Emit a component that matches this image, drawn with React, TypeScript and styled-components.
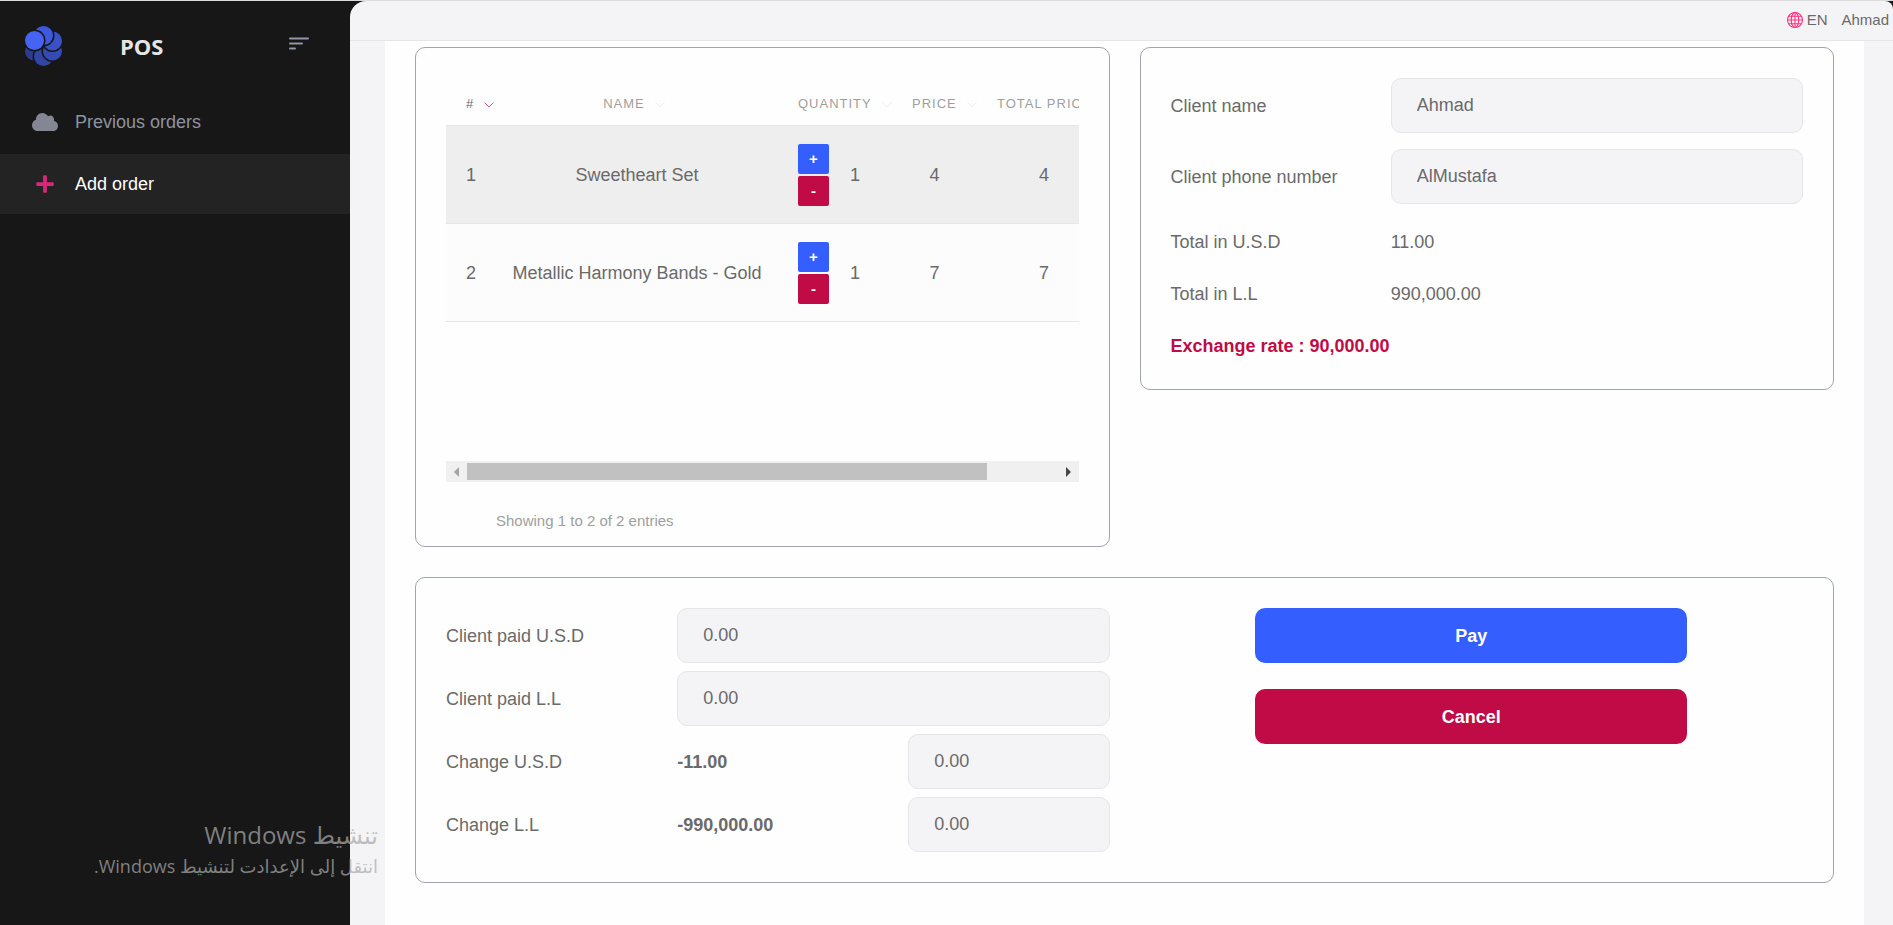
import React from "react";
import styled, { createGlobalStyle } from "styled-components";
import { FaCloud, FaPlus } from "react-icons/fa";

const GlobalStyle = createGlobalStyle`
  *, *::before, *::after { box-sizing: border-box; }
  body {
    margin: 0;
    background: #171717;
    color: #6a6a6a;
    font-family: "Liberation Sans", Arial, sans-serif;
    font-size: 18px;
    line-height: 24px;
  }
  button, input { font: inherit; color: inherit; }
`;

const Page = styled.div`
  display: flex;
  position: relative;
  min-height: 100vh;
  border-top: 1px solid #dcdcdc;
  overflow: hidden;
`;

const Sidebar = styled.aside`
  flex: 0 0 350px;
  background: #171717;
`;

const Brand = styled.div`
  display: grid;
  grid-template-columns: 95px 1fr 40px;
  align-items: center;
  height: 91px;
  padding: 0 21px 2px 25px;
`;

const BrandName = styled.span`
  color: #e5e5e5;
  font-family: "Open Sans", sans-serif;
  font-size: 22px;
  font-weight: 700;
`;

const MenuButton = styled.button`
  display: flex;
  align-self: start;
  width: 20px;
  margin-top: 36px;
  padding: 0;
  border: 0;
  background: none;
`;

const Nav = styled.nav`
  display: flex;
  flex-direction: column;
  gap: 2px;
`;

const NavLink = styled.a<{ $active?: boolean }>`
  display: grid;
  grid-template-columns: 30px 1fr;
  column-gap: 15px;
  align-items: center;
  height: 60px;
  padding-left: 30px;
  color: ${(p) => (p.$active ? "#ffffff" : "#8d93a1")};
  background: ${(p) => (p.$active ? "#232323" : "transparent")};
  text-decoration: none;
  svg { justify-self: center; color: ${(p) => (p.$active ? "#db2777" : "#828793")}; }
`;

const Main = styled.main`
  display: flex;
  flex: 1;
  flex-direction: column;
  min-width: 0;
  border-radius: 16px 8px 0 0;
  background: #f4f4f7;
`;

const TopBar = styled.header`
  display: flex;
  justify-content: flex-end;
  align-items: center;
  gap: 14px;
  height: 40px;
  padding: 0 4px 2px 0;
  border-bottom: 1px solid #e5e6ea;
  font-size: 15px;
`;

const Language = styled.button`
  display: flex;
  align-items: center;
  gap: 4px;
  padding: 0;
  border: 0;
  background: none;
`;

const Content = styled.div`
  display: grid;
  flex: 1;
  grid-template-columns: minmax(0, 1fr) minmax(0, 1fr);
  gap: 30px;
  align-content: start;
  align-items: start;
  margin: 0 29px 0 35px;
  padding: 6px 30px 30px;
  background: #fefefe;
`;

const Card = styled.section<{ $wide?: boolean; $bottom?: number }>`
  grid-column: ${(p) => (p.$wide ? "1 / -1" : "auto")};
  padding: 30px 30px ${(p) => p.$bottom ?? 30}px;
  border: 1px solid #a0a4b1;
  border-radius: 10px;
`;

const TableView = styled.div`
  height: 383px;
  overflow: hidden;
`;

const Table = styled.table`
  width: 721px;
  table-layout: fixed;
  border-collapse: separate;
  border-spacing: 0;
  text-align: center;
  white-space: nowrap;
`;

const HeadCell = styled.th<{ $center?: boolean; $sorted?: boolean }>`
  height: 48px;
  padding: 4px 26px 0 20px;
  border-bottom: 1px solid #e5e6ea;
  color: ${(p) => (p.$sorted ? "#666666" : "#9f9f9f")};
  font-size: 13px;
  font-weight: 400;
  letter-spacing: 1px;
  text-align: ${(p) => (p.$center ? "center" : "left")};
  svg { margin-left: 10px; color: ${(p) => (p.$sorted ? "#f0527f" : "#eeeeee")}; }
`;

const Row = styled.tr`
  background: #fcfcfc;
  &:nth-child(odd) { background: #eeeeee; }
`;

const Cell = styled.td`
  height: 98px;
  padding: 0 16px;
  border-bottom: 1px solid #e5e6ea;
`;

const Quantity = styled.div`
  display: flex;
  align-items: center;
  gap: 21px;
  padding-left: 4px;
`;

const Stepper = styled.div`
  display: flex;
  flex-direction: column;
  gap: 2px;
`;

const StepButton = styled.button<{ $minus?: boolean }>`
  width: 31px;
  height: 30px;
  padding: 0;
  border: 0;
  border-radius: 2px;
  background: ${(p) => (p.$minus ? "#c00b46" : "#355eff")};
  color: #ffffff;
  font-size: 15px;
  font-weight: 700;
`;

const Scrollbar = styled.div`
  display: grid;
  grid-template-columns: 21px 1fr 21px;
  align-items: center;
  justify-items: center;
  height: 21px;
  background: #f0f0f0;
`;

const ScrollTrack = styled.div`
  width: 100%;
`;

const ScrollThumb = styled.div`
  width: 88%;
  height: 17px;
  background: #c1c1c1;
`;

const TableInfo = styled.p`
  margin: 29px 0 0 50px;
  color: #9f9f9f;
  font-size: 15px;
  line-height: 20px;
`;

const ClientRow = styled.div`
  display: grid;
  grid-template-columns: 1fr 2fr;
  column-gap: 14px;
  align-items: center;
`;

const ClientFields = styled.div`
  display: flex;
  flex-direction: column;
  gap: 16px;
`;

const Totals = styled.div`
  display: flex;
  flex-direction: column;
  gap: 28px;
  padding: 26px 0 1px;
`;

const Rate = styled.strong`
  color: #c00b46;
`;

const Input = styled.input<{ $span?: boolean }>`
  grid-column: ${(p) => (p.$span ? "span 2" : "auto")};
  width: 100%;
  height: 55px;
  padding: 0 25px;
  border: 1px solid #e5e6ea;
  border-radius: 10px;
  background: #f4f4f7;
  outline: 0;
`;

const Payment = styled.div`
  display: grid;
  grid-template-columns: 1fr 1fr;
  column-gap: 30px;
`;

const PaymentFields = styled.div`
  display: grid;
  grid-template-columns: repeat(3, 1fr);
  gap: 8px 30px;
  align-items: center;
`;

const Actions = styled.div`
  display: grid;
  grid-template-columns: repeat(6, 1fr);
  gap: 26px 30px;
  align-content: start;
`;

const ActionButton = styled.button<{ $danger?: boolean }>`
  grid-column: 2 / span 4;
  height: 55px;
  border: 0;
  border-radius: 10px;
  background: ${(p) => (p.$danger ? "#c00b46" : "#355eff")};
  color: #ffffff;
  font-weight: 700;
`;

const Watermark = styled.div`
  position: absolute;
  left: 96px;
  bottom: 45px;
  width: 282px;
  color: rgba(170, 170, 170, 0.73);
  font-family: "Open Sans", "DejaVu Sans", sans-serif;
  font-size: 18px;
  line-height: 28px;
  white-space: nowrap;
  pointer-events: none;
`;

const WatermarkTitle = styled.div`
  font-size: 24px;
  line-height: 34px;
`;

const petals = [
  { cx: 9.5, cy: 25, fill: "#2c3d8f" },
  { cx: 18.5, cy: 30.5, fill: "#3045a4" },
  { cx: 27.5, cy: 25, fill: "#344bb6" },
  { cx: 27.5, cy: 15, fill: "#3951c6" },
  { cx: 18.5, cy: 9.5, fill: "#3d59dd" },
  { cx: 9.5, cy: 14.5, fill: "#4563f5" },
];

const Logo = () => (
  <svg width="37" height="40" viewBox="0 0 37 40" aria-hidden="true">
    {petals.map((p) => (
      <g key={p.fill}>
        <circle cx={p.cx} cy={p.cy} r="11" fill="#171717" />
        <circle cx={p.cx} cy={p.cy} r="9.5" fill={p.fill} />
      </g>
    ))}
  </svg>
);

const MenuIcon = () => (
  <svg width="20" height="13" viewBox="0 0 20 13" stroke="#9096a6" strokeWidth="2" strokeLinecap="round">
    <path d="M1 1.5h18M1 6.5h12M1 11.5h5" />
  </svg>
);

const Globe = () => (
  <svg width="16" height="16" viewBox="0 0 15 15" fill="none" stroke="#ff2e7e" strokeWidth="1" aria-hidden="true">
    <circle cx="7.5" cy="7.5" r="7" />
    <ellipse cx="7.5" cy="7.5" rx="3.5" ry="7" />
    <path d="M7.5 .5v14M.5 7.5h14M1.5 4h12M1.5 11h12" />
  </svg>
);

const Chevron = () => (
  <svg width="10" height="6" viewBox="0 0 10 6" fill="none" stroke="currentColor" aria-hidden="true">
    <path d="M.5 .5 5 5 9.5 .5" />
  </svg>
);

const Arrow = ({ right = false }: { right?: boolean }) => (
  <svg width="5" height="10" viewBox="0 0 5 10" fill={right ? "#444444" : "#a3a3a3"} aria-hidden="true">
    <path d={right ? "M0 0v10l5-5z" : "M5 0v10L0 5z"} />
  </svg>
);

const columns = [
  { label: "#", width: 50 },
  { label: "NAME", width: 282 },
  { label: "QUANTITY", width: 114 },
  { label: "PRICE", width: 85 },
  { label: "TOTAL PRICE", width: 134 },
  { label: "", width: 56 },
];

const items = [
  { id: 1, name: "Sweetheart Set", quantity: 1, price: 4, total: 4 },
  { id: 2, name: "Metallic Harmony Bands - Gold", quantity: 1, price: 7, total: 7 },
];

export default function App() {
  return (
    <>
      <GlobalStyle />
      <Page>
        <Sidebar>
          <Brand>
            <Logo />
            <BrandName>POS</BrandName>
            <MenuButton type="button" aria-label="Toggle menu"><MenuIcon /></MenuButton>
          </Brand>
          <Nav>
            <NavLink href="#orders"><FaCloud size={26} />Previous orders</NavLink>
            <NavLink href="#add" $active><FaPlus size={20} />Add order</NavLink>
          </Nav>
        </Sidebar>
        <Main>
          <TopBar>
            <Language type="button"><Globe />EN</Language>
            <span>Ahmad</span>
          </TopBar>
          <Content>
            <Card $bottom={15}>
              <TableView>
                <Table>
                  <colgroup>
                    {columns.map((c) => <col key={c.label} width={c.width} />)}
                  </colgroup>
                  <thead>
                    <tr>
                      {columns.map((c, i) => (
                        <HeadCell key={c.label} $center={i === 1} $sorted={i === 0}>
                          {c.label}
                          {c.label && <Chevron />}
                        </HeadCell>
                      ))}
                    </tr>
                  </thead>
                  <tbody>
                    {items.map((item) => (
                      <Row key={item.id}>
                        <Cell>{item.id}</Cell>
                        <Cell>{item.name}</Cell>
                        <Cell>
                          <Quantity>
                            <Stepper>
                              <StepButton type="button">+</StepButton>
                              <StepButton type="button" $minus>-</StepButton>
                            </Stepper>
                            {item.quantity}
                          </Quantity>
                        </Cell>
                        <Cell>{item.price}</Cell>
                        <Cell>{item.total}</Cell>
                        <Cell />
                      </Row>
                    ))}
                  </tbody>
                </Table>
              </TableView>
              <Scrollbar>
                <Arrow />
                <ScrollTrack><ScrollThumb /></ScrollTrack>
                <Arrow right />
              </Scrollbar>
              <TableInfo>Showing 1 to 2 of 2 entries</TableInfo>
            </Card>

            <Card>
              <ClientFields>
                <ClientRow>
                  <label htmlFor="client-name">Client name</label>
                  <Input id="client-name" defaultValue="Ahmad" />
                </ClientRow>
                <ClientRow>
                  <label htmlFor="client-phone">Client phone number</label>
                  <Input id="client-phone" defaultValue="AlMustafa" />
                </ClientRow>
              </ClientFields>
              <Totals>
                <ClientRow><span>Total in U.S.D</span><span>11.00</span></ClientRow>
                <ClientRow><span>Total in L.L</span><span>990,000.00</span></ClientRow>
                <Rate>Exchange rate : 90,000.00</Rate>
              </Totals>
            </Card>

            <Card $wide>
              <Payment>
                <PaymentFields>
                  <label htmlFor="paid-usd">Client paid U.S.D</label>
                  <Input id="paid-usd" $span defaultValue="0.00" />
                  <label htmlFor="paid-ll">Client paid L.L</label>
                  <Input id="paid-ll" $span defaultValue="0.00" />
                  <label htmlFor="change-usd">Change U.S.D</label>
                  <strong>-11.00</strong>
                  <Input id="change-usd" defaultValue="0.00" />
                  <label htmlFor="change-ll">Change L.L</label>
                  <strong>-990,000.00</strong>
                  <Input id="change-ll" defaultValue="0.00" />
                </PaymentFields>
                <Actions>
                  <ActionButton type="button">Pay</ActionButton>
                  <ActionButton type="button" $danger>Cancel</ActionButton>
                </Actions>
              </Payment>
            </Card>
          </Content>
        </Main>
        <Watermark dir="rtl">
          <WatermarkTitle>تنشيط Windows</WatermarkTitle>
          <div>انتقل إلى الإعدادت لتنشيط Windows.</div>
        </Watermark>
      </Page>
    </>
  );
}
